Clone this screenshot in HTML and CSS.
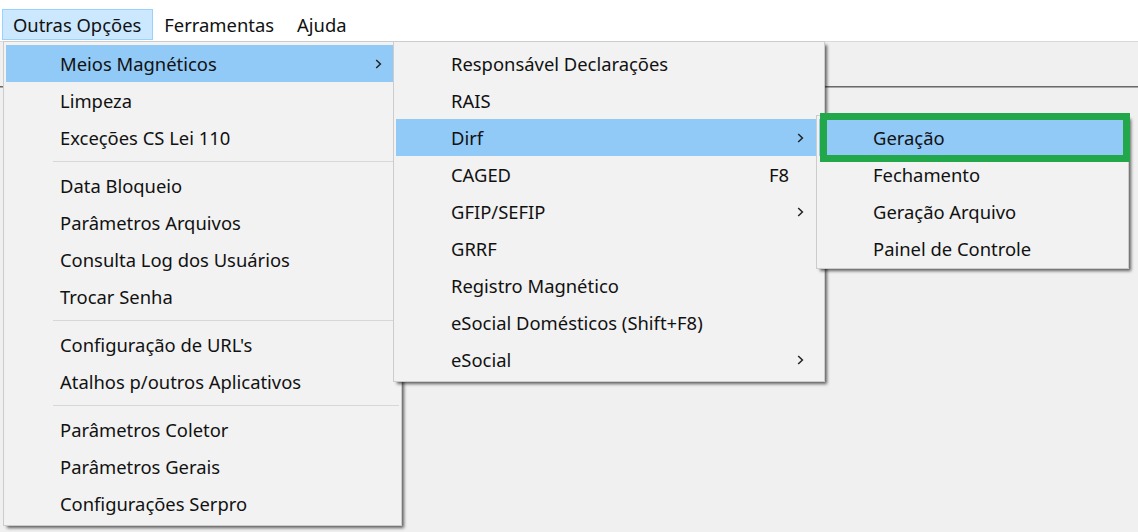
FILE: index.html
```html
<!DOCTYPE html>
<html lang="pt-BR">
<head>
<meta charset="utf-8">
<title>Menu</title>
<link rel="stylesheet" href="styles.css">
</head>
<body>
<div class="window">
  <div class="menubar">
    <div class="mb-item active">Outras Opções</div>
    <div class="mb-item">Ferramentas</div>
    <div class="mb-item">Ajuda</div>
  </div>
  <div class="toolbar"></div>
  <div class="client"></div>

  <div class="menu menu-main">
    <div class="mi hl"><span class="label">Meios Magnéticos</span><svg class="chev" viewBox="0 0 7 10" width="7" height="10"><path d="M1.2 1 L5.4 5 L1.2 9"/></svg></div>
    <div class="mi"><span class="label">Limpeza</span></div>
    <div class="mi"><span class="label">Exceções CS Lei 110</span></div>
    <div class="sep"></div>
    <div class="mi"><span class="label">Data Bloqueio</span></div>
    <div class="mi"><span class="label">Parâmetros Arquivos</span></div>
    <div class="mi"><span class="label">Consulta Log dos Usuários</span></div>
    <div class="mi"><span class="label">Trocar Senha</span></div>
    <div class="sep"></div>
    <div class="mi"><span class="label">Configuração de URL's</span></div>
    <div class="mi"><span class="label">Atalhos p/outros Aplicativos</span></div>
    <div class="sep"></div>
    <div class="mi"><span class="label">Parâmetros Coletor</span></div>
    <div class="mi"><span class="label">Parâmetros Gerais</span></div>
    <div class="mi"><span class="label">Configurações Serpro</span></div>
  </div>

  <div class="menu menu-mag">
    <div class="mi"><span class="label">Responsável Declarações</span></div>
    <div class="mi"><span class="label">RAIS</span></div>
    <div class="mi hl"><span class="label">Dirf</span><svg class="chev" viewBox="0 0 7 10" width="7" height="10"><path d="M1.2 1 L5.4 5 L1.2 9"/></svg></div>
    <div class="mi"><span class="label">CAGED</span><span class="key">F8</span></div>
    <div class="mi"><span class="label">GFIP/SEFIP</span><svg class="chev" viewBox="0 0 7 10" width="7" height="10"><path d="M1.2 1 L5.4 5 L1.2 9"/></svg></div>
    <div class="mi"><span class="label">GRRF</span></div>
    <div class="mi"><span class="label">Registro Magnético</span></div>
    <div class="mi"><span class="label">eSocial Domésticos (Shift+F8)</span></div>
    <div class="mi"><span class="label">eSocial</span><svg class="chev" viewBox="0 0 7 10" width="7" height="10"><path d="M1.2 1 L5.4 5 L1.2 9"/></svg></div>
  </div>

  <div class="menu menu-dirf">
    <div class="mi hl"><span class="label">Geração</span></div>
    <div class="mi"><span class="label">Fechamento</span></div>
    <div class="mi"><span class="label">Geração Arquivo</span></div>
    <div class="mi"><span class="label">Painel de Controle</span></div>
  </div>

  <div class="callout"></div>
</div>
</body>
</html>
```

FILE: styles.css
```css
html, body {
  margin: 0;
  padding: 0;
}
body {
  width: 1138px;
  height: 532px;
  overflow: hidden;
  background: #f0f0f0;
  font-family: "Noto Sans", "Open Sans", sans-serif;
  font-size: 18.4px;
  color: #111111;
}
.window {
  position: relative;
  width: 1138px;
  height: 532px;
}
.menubar {
  display: flex;
  align-items: stretch;
  height: 31px;
  padding: 9px 0 1px 2px;
  background: #ffffff;
  border-bottom: 1px solid #d9d9d9;
}
.mb-item {
  padding: 0 11px 0 10px;
  line-height: 29px;
  border: 1px solid transparent;
}
.mb-item.active {
  background: #cce8ff;
  border-color: #99d1ff;
}
.toolbar {
  height: 44px;
  border-bottom: 1px solid #6a6a6a;
  box-shadow: 0 1px 0 #a8a8a8;
}
.client {
  flex: 1;
}
.menu {
  position: absolute;
  display: flex;
  flex-direction: column;
  background: #f2f2f2;
  border: 1px solid #cccccc;
  padding: 3px 2px 3px 2px;
  box-shadow: 3px 3px 3px -1px rgba(0, 0, 0, 0.6);
}
.menu-main {
  left: 3px;
  top: 41px;
  width: 393px;
  z-index: 1;
}
.menu-mag {
  left: 393px;
  top: 41px;
  width: 426px;
  z-index: 2;
}
.menu-dirf {
  left: 816px;
  top: 115px;
  width: 307px;
  padding-bottom: 1px;
  z-index: 3;
}
.mi {
  display: flex;
  align-items: center;
  height: 37px;
  padding-left: 54px;
  padding-right: 17px;
}
.menu-mag .mi {
  padding-left: 55px;
  padding-right: 18px;
}
.menu-dirf .mi {
  padding-left: 54px;
}
.mi.hl {
  background: #91c9f7;
}
.label {
  flex: 1;
  white-space: nowrap;
}
.key {
  margin-right: 15px;
}
.chev {
  flex: none;
  fill: none;
  stroke: #222222;
  stroke-width: 1.5;
}
.sep {
  height: 1px;
  margin: 5px 0 5px 47px;
  background: #d7d7d7;
}
.callout {
  position: absolute;
  left: 820px;
  top: 113px;
  width: 296px;
  height: 35px;
  border: 7px solid #22a84a;
  z-index: 4;
}
```
